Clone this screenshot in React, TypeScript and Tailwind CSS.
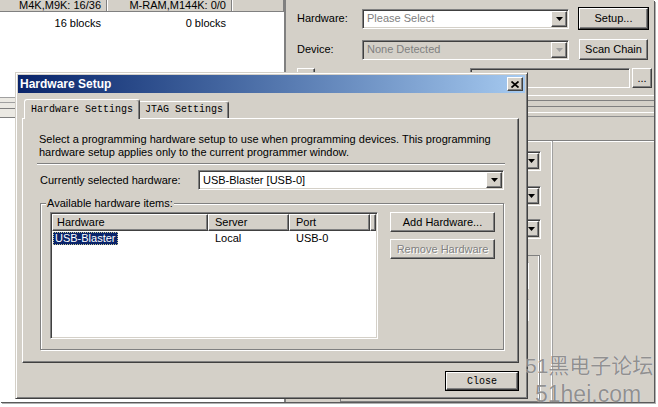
import React from "react";

const MONO = "font-['Liberation_Mono','Courier_New',monospace]";
const raised =
  "border border-t-white border-l-white border-r-[#404040] border-b-[#404040] shadow-[inset_-1px_-1px_0_#808080]";
const sunken =
  "border border-t-[#808080] border-l-[#808080] border-r-white border-b-white shadow-[inset_1px_1px_0_#404040,inset_-1px_-1px_0_#d4d0c8]";
const disabledText = "text-[#808080] [text-shadow:1px_1px_0_#ffffff]";

function Arrow({ color = "#000" }: { color?: string }) {
  return (
    <svg width="7" height="4" viewBox="0 0 7 4">
      <path d="M0 0H7L3.5 4Z" fill={color} />
    </svg>
  );
}

function DropBtn({ disabled }: { disabled?: boolean }) {
  return (
    <div className={`${raised} w-[16px] h-[16px] bg-[#d4d0c8] flex items-center justify-center shrink-0`}>
      <Arrow color={disabled ? "#a0a0a0" : "#000"} />
    </div>
  );
}

function Combo({
  text,
  disabled,
  placeholder,
  className = "",
}: {
  text: string;
  disabled?: boolean;
  placeholder?: boolean;
  className?: string;
}) {
  return (
    <div
      className={`${sunken} h-[20px] p-[1px] flex items-center ${disabled ? "bg-[#d4d0c8]" : "bg-white"} ${className}`}
    >
      <span
        className={`flex-1 pl-[3px] text-[11px] leading-[13px] whitespace-nowrap overflow-hidden ${
          disabled || placeholder ? "text-[#808080]" : "text-black"
        }`}
      >
        {text}
      </span>
      <DropBtn disabled={disabled} />
    </div>
  );
}

function Btn({
  children,
  def,
  disabled,
  className = "",
  mono,
}: {
  children: React.ReactNode;
  def?: boolean;
  disabled?: boolean;
  className?: string;
  mono?: boolean;
}) {
  const inner = (
    <div
      className={`${raised} bg-[#d4d0c8] w-full h-full flex items-center justify-center whitespace-nowrap ${
        mono ? `${MONO} text-[10px]` : "text-[11px]"
      } ${disabled ? disabledText : "text-black"}`}
    >
      {children}
    </div>
  );
  if (def) {
    return <div className={`border border-black ${className}`}>{inner}</div>;
  }
  return <div className={className}>{inner}</div>;
}

function Dialog() {
  return (
    <div className="absolute left-[15px] top-[72px] w-[513px] h-[327px] bg-[#d4d0c8] border border-t-[#d4d0c8] border-l-[#d4d0c8] border-r-[#404040] border-b-[#404040] shadow-[inset_1px_1px_0_#ffffff,inset_-1px_-1px_0_#808080] p-[2px] flex flex-col">
      {/* title bar */}
      <div className="h-[18px] bg-linear-to-r from-[#0a246a] to-[#a6caf0] flex items-center justify-between pl-[2px] pr-[2px]">
        <span className="text-white font-bold text-[12px] leading-[14px]">Hardware Setup</span>
        <div className={`${raised} bg-[#d4d0c8] w-[16px] h-[14px] flex items-center justify-center`}>
          <svg width="8" height="7" viewBox="0 0 8 7">
            <path d="M0.5 0.5L7.5 6.5M7.5 0.5L0.5 6.5" stroke="#000" strokeWidth="1.7" />
          </svg>
        </div>
      </div>

      {/* tabs */}
      <div className="mt-[6px] ml-[4px] w-[497px] h-[19px] flex items-end relative z-10">
        <div className="ml-[2px] mb-[-1px] w-[116px] h-[20px] bg-[#d4d0c8] border-t border-l border-r border-t-white border-l-white border-r-[#404040] shadow-[inset_-1px_0_0_#808080] rounded-t-[3px] flex items-center justify-center">
          <span className={`${MONO} text-[10px] leading-[12px] text-black`}>Hardware Settings</span>
        </div>
        <div className="w-[89px] h-[17px] bg-[#d4d0c8] border-t border-r border-t-white border-r-[#404040] shadow-[inset_-1px_0_0_#808080] rounded-tr-[3px] flex items-center justify-center">
          <span className={`${MONO} text-[10px] leading-[12px] text-black`}>JTAG Settings</span>
        </div>
      </div>

      {/* panel */}
      <div className={`${raised} ml-[4px] w-[497px] h-[245px] pt-[14px] pl-[14px] pr-[13px] flex flex-col`}>
        <div className="pl-[2px] text-[11px] leading-[13px] text-black">
          <div>Select a programming hardware setup to use when programming devices. This programming</div>
          <div>hardware setup applies only to the current programmer window.</div>
        </div>
        <div className="mt-[4px] h-[2px] border-t border-t-[#808080] border-b border-b-white" />
        <div className="mt-[5px] flex items-center">
          <span className="w-[161px] pl-[3px] text-[11px] leading-[13px] text-black">Currently selected hardware:</span>
          <Combo className="flex-1 mr-[1px]" text="USB-Blaster [USB-0]" />
        </div>
        <fieldset className="mt-[7px] ml-[3px] mr-[1px] h-[153px] border border-[#808080] shadow-[inset_1px_1px_0_#ffffff,1px_1px_0_#ffffff] pl-[9px]">
          <legend className="-ml-[4px] px-[1px] bg-[#d4d0c8] text-[11px] leading-[13px] text-black">
            Available hardware items:
          </legend>
          <div className="mt-[2px] flex items-start">
            <div className={`${sunken} p-[1px] w-[328px] h-[127px] bg-white flex flex-col`}>
              <div className="flex h-[17px] shrink-0">
                {[
                  ["Hardware", "w-[156px] pl-[4px]"],
                  ["Server", "w-[81px] pl-[6px]"],
                  ["Port", "w-[81px] pl-[6px]"],
                  ["", "flex-1"],
                ].map(([t, c], i) => (
                  <div
                    key={i}
                    className={`${raised} ${c} bg-[#d4d0c8] flex items-center text-[11px] leading-[13px] text-black`}
                  >
                    {t}
                  </div>
                ))}
              </div>
              <div className="flex h-[13px] mt-[1px] text-[11px] leading-[11px]">
                <div className="w-[156px] pl-[1px]">
                  <span className="inline-block h-[13px] px-[1px] bg-[#0a246a] text-white border border-dotted border-[#c8c896] leading-[11px]">
                    USB-Blaster
                  </span>
                </div>
                <div className="w-[81px] pl-[7px] text-black leading-[13px]">Local</div>
                <div className="w-[81px] pl-[7px] text-black leading-[13px]">USB-0</div>
              </div>
            </div>
            <div className="ml-[12px] w-[105px] flex flex-col gap-[7px]">
              <Btn className="h-[20px]">Add Hardware...</Btn>
              <Btn className="h-[20px]" disabled>
                Remove Hardware
              </Btn>
            </div>
          </div>
        </fieldset>
      </div>

      <div className="mt-[8px] flex justify-end pr-[6px]">
        <Btn def mono className="w-[74px] h-[20px]">
          Close
        </Btn>
      </div>
    </div>
  );
}

export default function App() {
  return (
    <div className="w-[658px] h-[407px] bg-white relative overflow-hidden font-['Liberation_Sans',Arial,sans-serif]">
      <div className="w-[654px] h-[402px] flex shadow-[1px_1px_0_#5a5a5a,2px_2px_0_#b0b0b0]">
        {/* left pane */}
        <div className="w-[286px] bg-white border-r-2 border-r-[#808080] flex flex-col">
          <div className="flex h-[12px] bg-[#d4d0c8] border-b border-b-[#808080] text-[11px] leading-[11px] text-black">
            <div className="w-[107px] border-r border-r-[#808080] flex items-center justify-end pr-[5px]">
              M4K,M9K: 16/36
            </div>
            <div className="w-[125px] border-l border-l-white border-r border-r-[#808080] flex items-center justify-end pr-[5px]">
              M-RAM,M144K: 0/0
            </div>
            <div className="flex-1 border-l border-l-white border-r border-r-[#808080]" />
          </div>
          <div className="flex mt-[5px] text-[11px] leading-[13px] text-black">
            <div className="w-[107px] text-right pr-[6px]">16 blocks</div>
            <div className="w-[125px] text-right pr-[6px]">0 blocks</div>
          </div>
          <div className="mt-[67px] h-[21px] bg-[#ebe9e3] flex flex-col">
            <div className="h-[1px] bg-[#a0a0a0]" />
            <div className="mt-[4px] h-[1px] bg-[#a0a0a0]" />
            <div className="mt-[5px] h-[1px] bg-[#808080]" />
            <div className="mt-[8px] h-[1px] bg-[#808080]" />
          </div>
        </div>

        {/* right pane */}
        <div className="flex-1 bg-[#d4d0c8] flex flex-col text-[11px] leading-[13px] text-black">
          <div className="flex items-center h-[23px] mt-[7px] pl-[11px]">
            <span className="w-[65px]">Hardware:</span>
            <Combo className="w-[207px]" text="Please Select" placeholder />
            <Btn def className="ml-[9px] w-[71px] h-[23px]">
              Setup...
            </Btn>
          </div>
          <div className="flex items-center h-[21px] mt-[9px] pl-[11px]">
            <span className="w-[65px]">Device:</span>
            <Combo className="w-[207px]" text="None Detected" disabled />
            <Btn className="ml-[10px] w-[69px] h-[21px]">Scan Chain</Btn>
          </div>
          <div className="flex items-center h-[20px] mt-[8px] pl-[11px]">
            <div className={`${raised} w-[18px] h-[20px] bg-[#d4d0c8]`} />
            <div className={`${sunken} ml-[155px] w-[160px] h-[20px] bg-[#d4d0c8]`} />
            <Btn className="ml-[2px] w-[20px] h-[20px]">...</Btn>
          </div>
          <div className="mt-[7px] h-[1px] bg-white" />
          <div className="mt-[4px] h-[1px] bg-[#808080]" />
          <div className="mt-[5px] h-[1px] bg-[#808080]" />
          <div className="mt-[5px] h-[1px] bg-white" />
          <div className="mt-[3px] h-[1px] bg-[#909090]" />
          <div className="mt-[23px] flex-1 flex border-t border-t-[#808080]">
            <div className="w-[265px] border-t border-t-white flex flex-col items-end pr-[10px]">
              <Combo className="mt-[9px] w-[200px]" text="" />
              <Combo className="mt-[15px] w-[200px]" text="" />
              <Combo className="mt-[13px] w-[200px]" text="" />
              <div className="mt-[16px] w-[200px] flex-1 border border-[#808080] shadow-[inset_-1px_0_0_#ffffff,1px_0_0_#ffffff] mr-[1px] flex flex-col items-end pr-[10px]">
                <div className={`${sunken} mt-[6px] w-[40px] h-[27px]`} />
                <div className={`${sunken} mt-[10px] w-[40px] h-[22px] bg-[#c8c4bc]`} />
              </div>
            </div>
            <div className="w-[2px] border-l border-l-white border-r border-r-[#a0a0a0]" />
            <div className="flex-1 border-t border-t-white" />
          </div>
        </div>
      </div>

      <Dialog />

      {/* watermark */}
      <div className="absolute left-[525px] top-[355px] text-[21px] leading-[21px] text-[#8a8a8a] opacity-90 whitespace-nowrap font-['Liberation_Sans','Noto_Sans_CJK_SC',sans-serif] [text-shadow:0_0_1px_#ffffff]">
        51黑电子论坛
      </div>
      <div className="absolute left-[535px] top-[383px] text-[23px] leading-[23px] text-[#8a8a8a] opacity-90 whitespace-nowrap [text-shadow:0_0_1px_#ffffff]">
        51hei.com
      </div>
    </div>
  );
}
